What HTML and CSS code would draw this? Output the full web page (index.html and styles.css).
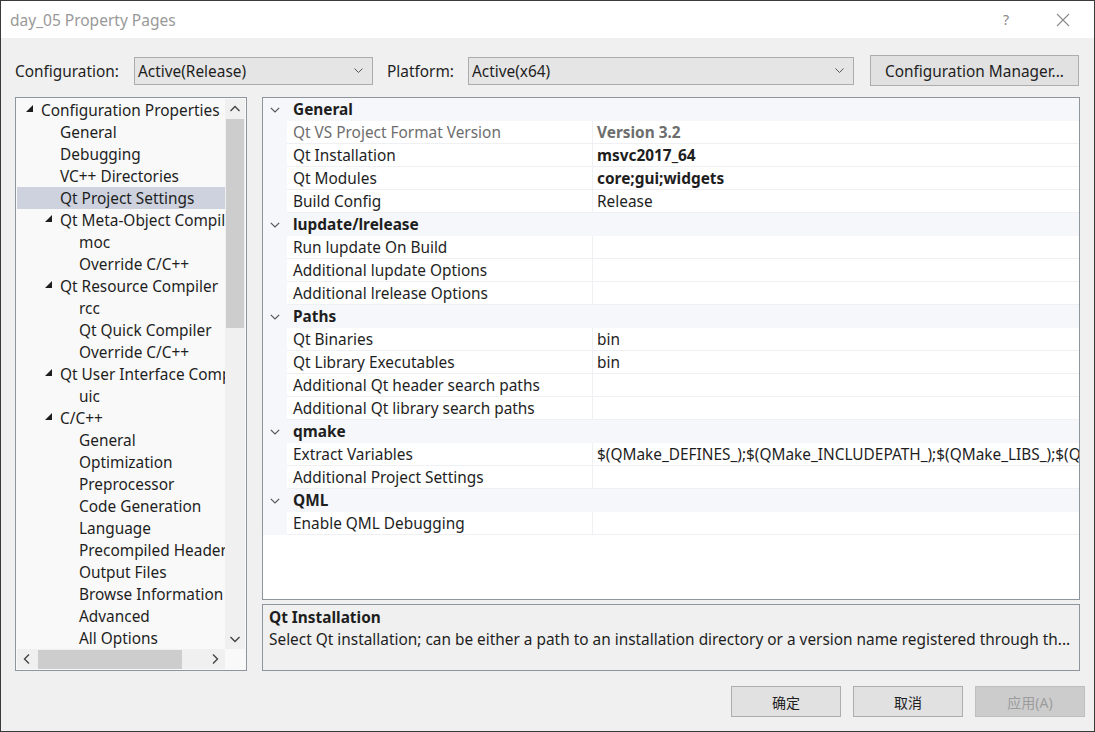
FILE: index.html
```html
<!DOCTYPE html>
<html>
<head>
<meta charset="utf-8">
<link rel="stylesheet" href="styles.css">
</head>
<body>
<div class="window">
  <div class="titlebar">
    <span class="title">day_05 Property Pages</span>
    <span class="tb-help">?</span>
    <span class="tb-close"><svg width="14" height="14" viewBox="0 0 14 14"><path d="M1 1L13 13M13 1L1 13" stroke="#8a8a8a" stroke-width="1.1" fill="none"/></svg></span>
  </div>
  <div class="body">
    <div class="toolbar">
      <span class="lbl lbl-config">Configuration:</span>
      <div class="combo combo-config"><span>Active(Release)</span><svg class="chev" width="9" height="6" viewBox="0 0 9 6"><path d="M0.5 0.5L4.5 4.5L8.5 0.5" stroke="#555" fill="none"/></svg></div>
      <span class="lbl lbl-platform">Platform:</span>
      <div class="combo combo-platform"><span>Active(x64)</span><svg class="chev" width="9" height="6" viewBox="0 0 9 6"><path d="M0.5 0.5L4.5 4.5L8.5 0.5" stroke="#555" fill="none"/></svg></div>
      <button class="btn btn-cm">Configuration Manager...</button>
    </div>
    <div class="content">
      <div class="tree">
        <div class="tree-inner">
          <div class="tree-rows">
            <div class="trow l0"><svg class="tri" width="7" height="7" viewBox="0 0 7 7"><polygon points="7,0 7,7 0,7" fill="#1e1e1e"/></svg>Configuration Properties</div>
            <div class="trow l1">General</div>
            <div class="trow l1">Debugging</div>
            <div class="trow l1">VC++ Directories</div>
            <div class="trow l1 sel">Qt Project Settings</div>
            <div class="trow l1e"><svg class="tri" width="7" height="7" viewBox="0 0 7 7"><polygon points="7,0 7,7 0,7" fill="#1e1e1e"/></svg>Qt Meta-Object Compiler</div>
            <div class="trow l2">moc</div>
            <div class="trow l2">Override C/C++</div>
            <div class="trow l1e"><svg class="tri" width="7" height="7" viewBox="0 0 7 7"><polygon points="7,0 7,7 0,7" fill="#1e1e1e"/></svg>Qt Resource Compiler</div>
            <div class="trow l2">rcc</div>
            <div class="trow l2">Qt Quick Compiler</div>
            <div class="trow l2">Override C/C++</div>
            <div class="trow l1e"><svg class="tri" width="7" height="7" viewBox="0 0 7 7"><polygon points="7,0 7,7 0,7" fill="#1e1e1e"/></svg>Qt User Interface Compiler</div>
            <div class="trow l2">uic</div>
            <div class="trow l1e"><svg class="tri" width="7" height="7" viewBox="0 0 7 7"><polygon points="7,0 7,7 0,7" fill="#1e1e1e"/></svg>C/C++</div>
            <div class="trow l2">General</div>
            <div class="trow l2">Optimization</div>
            <div class="trow l2">Preprocessor</div>
            <div class="trow l2">Code Generation</div>
            <div class="trow l2">Language</div>
            <div class="trow l2">Precompiled Headers</div>
            <div class="trow l2">Output Files</div>
            <div class="trow l2">Browse Information</div>
            <div class="trow l2">Advanced</div>
            <div class="trow l2">All Options</div>
          </div>
          <div class="vscroll">
            <svg class="sarrow" width="20" height="20" viewBox="0 0 20 20"><path d="M5.5 12L10 7.5L14.5 12" stroke="#444" stroke-width="1.4" fill="none"/></svg>
            <div class="vthumb"></div>
            <div class="vspace"></div>
            <svg class="sarrow" width="20" height="20" viewBox="0 0 20 20"><path d="M5.5 8L10 12.5L14.5 8" stroke="#444" stroke-width="1.4" fill="none"/></svg>
          </div>
        </div>
        <div class="hscroll-row">
          <div class="hscroll">
            <svg class="sarrow" width="20" height="20" viewBox="0 0 20 20"><path d="M12 5.5L7.5 10L12 14.5" stroke="#444" stroke-width="1.4" fill="none"/></svg>
            <div class="hthumb"></div>
            <div class="hspace"></div>
            <svg class="sarrow" width="20" height="20" viewBox="0 0 20 20"><path d="M8 5.5L12.5 10L8 14.5" stroke="#444" stroke-width="1.4" fill="none"/></svg>
          </div>
          <div class="corner"></div>
        </div>
      </div>
      <div class="right">
        <div class="grid">
          <div class="cat"><span class="gut"><svg width="10" height="6" viewBox="0 0 10 6"><path d="M0.8 0.8L5 5L9.2 0.8" stroke="#555" stroke-width="1.2" fill="none"/></svg></span><span class="cat-name">General</span></div>
          <div class="prow ro"><span class="gut"></span><span class="pname">Qt VS Project Format Version</span><span class="pval b">Version 3.2</span></div>
          <div class="prow"><span class="gut"></span><span class="pname">Qt Installation</span><span class="pval b">msvc2017_64</span></div>
          <div class="prow"><span class="gut"></span><span class="pname">Qt Modules</span><span class="pval b">core;gui;widgets</span></div>
          <div class="prow"><span class="gut"></span><span class="pname">Build Config</span><span class="pval">Release</span></div>
          <div class="cat"><span class="gut"><svg width="10" height="6" viewBox="0 0 10 6"><path d="M0.8 0.8L5 5L9.2 0.8" stroke="#555" stroke-width="1.2" fill="none"/></svg></span><span class="cat-name">lupdate/lrelease</span></div>
          <div class="prow"><span class="gut"></span><span class="pname">Run lupdate On Build</span><span class="pval"></span></div>
          <div class="prow"><span class="gut"></span><span class="pname">Additional lupdate Options</span><span class="pval"></span></div>
          <div class="prow"><span class="gut"></span><span class="pname">Additional lrelease Options</span><span class="pval"></span></div>
          <div class="cat"><span class="gut"><svg width="10" height="6" viewBox="0 0 10 6"><path d="M0.8 0.8L5 5L9.2 0.8" stroke="#555" stroke-width="1.2" fill="none"/></svg></span><span class="cat-name">Paths</span></div>
          <div class="prow"><span class="gut"></span><span class="pname">Qt Binaries</span><span class="pval">bin</span></div>
          <div class="prow"><span class="gut"></span><span class="pname">Qt Library Executables</span><span class="pval">bin</span></div>
          <div class="prow"><span class="gut"></span><span class="pname">Additional Qt header search paths</span><span class="pval"></span></div>
          <div class="prow"><span class="gut"></span><span class="pname">Additional Qt library search paths</span><span class="pval"></span></div>
          <div class="cat"><span class="gut"><svg width="10" height="6" viewBox="0 0 10 6"><path d="M0.8 0.8L5 5L9.2 0.8" stroke="#555" stroke-width="1.2" fill="none"/></svg></span><span class="cat-name">qmake</span></div>
          <div class="prow"><span class="gut"></span><span class="pname">Extract Variables</span><span class="pval">$(QMake_DEFINES_);$(QMake_INCLUDEPATH_);$(QMake_LIBS_);$(QMake_LIBPATH_)</span></div>
          <div class="prow"><span class="gut"></span><span class="pname">Additional Project Settings</span><span class="pval"></span></div>
          <div class="cat"><span class="gut"><svg width="10" height="6" viewBox="0 0 10 6"><path d="M0.8 0.8L5 5L9.2 0.8" stroke="#555" stroke-width="1.2" fill="none"/></svg></span><span class="cat-name">QML</span></div>
          <div class="prow"><span class="gut"></span><span class="pname">Enable QML Debugging</span><span class="pval"></span></div>
        </div>
        <div class="desc">
          <div class="desc-title">Qt Installation</div>
          <div class="desc-text">Select Qt installation; can be either a path to an installation directory or a version name registered through th...</div>
        </div>
      </div>
    </div>
    <div class="buttons">
      <button class="btn btn-dlg">确定</button>
      <button class="btn btn-dlg">取消</button>
      <button class="btn btn-dlg disabled">应用(A)</button>
    </div>
  </div>
</div>
</body>
</html>
```
FILE: styles.css
```css
* { box-sizing: border-box; }
html, body { margin: 0; padding: 0; }
body {
  width: 1095px;
  height: 732px;
  overflow: hidden;
  font-family: "Noto Sans", "Noto Sans CJK SC", sans-serif;
  font-size: 15.4px;
  color: #1e1e1e;
}
.window {
  width: 1095px;
  height: 732px;
  border: 1px solid #3a3a3a;
  background: #f0f0f0;
  display: flex;
  flex-direction: column;
}
.titlebar {
  height: 37px;
  background: #fff;
  display: flex;
  align-items: center;
  padding-left: 9px;
  flex-shrink: 0;
}
.title {
  color: #999;
  font-size: 15.5px;
  flex: 1;
}
.tb-help {
  color: #888;
  font-size: 14px;
  width: 12px;
  margin-right: 41px;
}
.tb-close {
  width: 14px;
  height: 14px;
  margin-right: 24px;
  display: flex;
}
.body {
  flex: 1;
  display: flex;
  flex-direction: column;
}
.toolbar {
  display: flex;
  align-items: center;
  height: 31px;
  margin-top: 17px;
  padding-left: 14px;
}
.lbl { white-space: nowrap; padding-top: 1px; }
.lbl-config { width: 119px; }
.lbl-platform { width: 81px; }
.combo {
  height: 28px;
  background: #e5e5e5;
  border: 1px solid #acacac;
  display: flex;
  align-items: center;
  justify-content: space-between;
  padding: 1px 9px 0 3px;
}
.combo-config { width: 239px; margin-right: 14px; }
.combo-platform { width: 386px; margin-right: 16px; }
.btn {
  font-family: inherit;
  font-size: 15.4px;
  color: #1e1e1e;
  background: #e1e1e1;
  border: 1px solid #adadad;
  padding: 0;
}
.btn-cm { width: 209px; height: 31px; padding-top: 1px; }
.content {
  display: flex;
  margin-top: 11px;
  padding-left: 14px;
  height: 574px;
}
.tree {
  width: 232px;
  height: 574px;
  border: 1px solid #8f959c;
  background: #f9f9f9;
  padding: 1px;
  display: flex;
  flex-direction: column;
}
.tree-inner {
  display: flex;
  height: 550px;
}
.tree-rows {
  width: 208px;
  overflow: hidden;
}
.trow {
  height: 22px;
  line-height: 22px;
  padding-top: 1px;
  white-space: nowrap;
  display: flex;
  align-items: center;
}
.trow .tri { margin-right: 8px; flex-shrink: 0; position: relative; top: -2px; }
.l0 { padding-left: 9px; }
.l1 { padding-left: 43px; }
.l1e { padding-left: 28px; }
.l2 { padding-left: 62px; }
.sel { background: #cdd2de; }
.vscroll {
  width: 20px;
  background: #f0f0f0;
  display: flex;
  flex-direction: column;
}
.sarrow { flex-shrink: 0; display: block; }
.vthumb {
  height: 209px;
  margin: 0 1px;
  background: #cdcdcd;
}
.vspace { flex: 1; }
.hscroll-row {
  display: flex;
  height: 20px;
}
.hscroll {
  width: 208px;
  display: flex;
  align-items: center;
  background: #f0f0f0;
}
.hthumb {
  width: 144px;
  height: 19px;
  background: #cdcdcd;
  margin-left: 1px;
}
.hspace { flex: 1; }
.corner { width: 20px; background: #f9f9f9; }
.right {
  margin-left: 15px;
  width: 818px;
  display: flex;
  flex-direction: column;
}
.grid {
  height: 503px;
  border: 1px solid #8f959c;
  background: #fff;
  overflow: hidden;
}
.cat, .prow {
  height: 23px;
  display: flex;
  align-items: stretch;
  white-space: nowrap;
}
.cat { background: #f5f7fa; }
.gut {
  width: 24px;
  flex-shrink: 0;
  background: #f5f7fa;
  display: flex;
  align-items: center;
  justify-content: center;
}
.cat-name {
  font-weight: bold;
  padding-left: 6px;
  padding-top: 1px;
  line-height: 22px;
}
.pname {
  width: 306px;
  flex-shrink: 0;
  padding-left: 6px;
  padding-top: 1px;
  line-height: 21px;
  border-bottom: 1px solid #eef0f3;
  border-right: 1px solid #eef0f3;
  overflow: hidden;
}
.pval {
  flex: 1;
  padding-left: 4px;
  padding-top: 1px;
  line-height: 21px;
  border-bottom: 1px solid #eef0f3;
  overflow: hidden;
}
.b { font-weight: bold; }
.ro .pname, .ro .pval { color: #6d6d6d; }
.desc {
  margin-top: 4px;
  height: 67px;
  border: 1px solid #8f959c;
  background: #f0f0f0;
  padding: 2px 6px 0;
}
.desc-title { font-weight: bold; line-height: 21px; }
.desc-text { line-height: 24px; white-space: nowrap; overflow: hidden; }
.buttons {
  display: flex;
  justify-content: flex-end;
  gap: 12px;
  margin-top: 15px;
  padding-right: 9px;
}
.btn-dlg {
  width: 110px;
  height: 31px;
  font-size: 14px;
}
.btn-dlg.disabled {
  background: #cccccc;
  border-color: #bfbfbf;
  color: #9c9c9c;
}
```
